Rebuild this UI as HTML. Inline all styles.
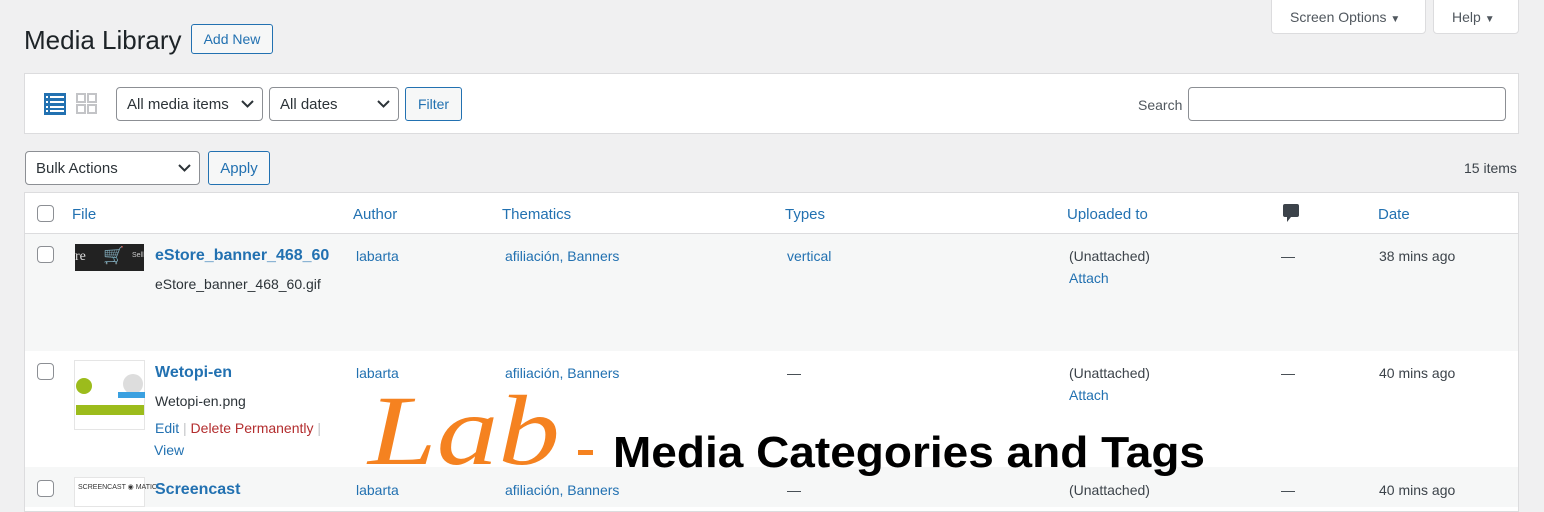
<!DOCTYPE html>
<html><head><meta charset="utf-8"><style>
*{box-sizing:border-box;margin:0;padding:0}
body{width:1544px;height:500px;overflow:hidden;background:#f0f0f1;font-family:"Liberation Sans",sans-serif;font-size:13px;color:#3c434a;position:relative}
.a{position:absolute}
.link{color:#2271b1}
.btn{position:absolute;border:1px solid #2271b1;color:#2271b1;background:#f6f7f7;border-radius:3px;font-size:13px;text-align:center}
.sel{position:absolute;border:1px solid #8c8f94;background:#fff;border-radius:4px;font-size:15px;color:#2c3338;padding-left:10px}
.sel svg{position:absolute;right:8px;top:50%;margin-top:-4px}
.cb{position:absolute;width:17px;height:17px;border:1px solid #8c8f94;border-radius:4px;background:#fff}
.t{position:absolute;white-space:nowrap}
</style></head><body>
<div class="a" style="left:1271px;top:-2px;width:155px;height:36px;background:#fff;border:1px solid #dcdcde;border-radius:0 0 4px 4px"></div>
<div class="t" style="left:1290px;top:9px;font-size:14px;color:#50575e">Screen Options <span style="font-size:10px">▼</span></div>
<div class="a" style="left:1433px;top:-2px;width:86px;height:36px;background:#fff;border:1px solid #dcdcde;border-radius:0 0 4px 4px"></div>
<div class="t" style="left:1452px;top:9px;font-size:14px;color:#50575e">Help <span style="font-size:10px">▼</span></div>

<div class="t" style="left:24px;top:25px;font-size:26px;color:#1d2327">Media Library</div>
<div class="btn" style="left:191px;top:24px;width:82px;height:30px;line-height:29px;font-size:14px">Add New</div>

<div class="a" style="left:24px;top:73px;width:1495px;height:61px;background:#fff;border:1px solid #dcdcde"></div>
<svg class="a" style="left:44px;top:93px" width="22" height="22"><rect width="22" height="22" fill="#2271b1"/><g fill="#fff"><rect x="2" y="3" width="2" height="2"/><rect x="6" y="3" width="14" height="2"/><rect x="2" y="8" width="2" height="2"/><rect x="6" y="8" width="14" height="2"/><rect x="2" y="13" width="2" height="2"/><rect x="6" y="13" width="14" height="2"/><rect x="2" y="17" width="2" height="2"/><rect x="6" y="17" width="14" height="2"/></g></svg>
<svg class="a" style="left:76px;top:93px" width="21" height="21"><g fill="#c3c4c7"><rect width="10" height="10"/><rect x="11" width="10" height="10"/><rect y="11" width="10" height="10"/><rect x="11" y="11" width="10" height="10"/></g><g fill="#fff"><rect x="2" y="2" width="6" height="6"/><rect x="13" y="2" width="6" height="6"/><rect x="2" y="13" width="6" height="6"/><rect x="13" y="13" width="6" height="6"/></g></svg>
<div class="sel" style="left:116px;top:87px;width:147px;height:34px;line-height:34px">All media items<svg width="13" height="8"><path d="M1 1l5.5 5.5L12 1" stroke="#2c3338" stroke-width="2" fill="none"/></svg></div>
<div class="sel" style="left:269px;top:87px;width:130px;height:34px;line-height:34px">All dates<svg width="13" height="8"><path d="M1 1l5.5 5.5L12 1" stroke="#2c3338" stroke-width="2" fill="none"/></svg></div>
<div class="btn" style="left:405px;top:87px;width:57px;height:34px;line-height:33px;font-size:14px">Filter</div>
<div class="t" style="left:1138px;top:97px;font-size:14px;color:#50575e">Search</div>
<div class="a" style="left:1188px;top:87px;width:318px;height:34px;border:1px solid #8c8f94;border-radius:4px;background:#fff"></div>

<div class="sel" style="left:25px;top:151px;width:175px;height:34px;line-height:34px">Bulk Actions<svg width="13" height="8"><path d="M1 1l5.5 5.5L12 1" stroke="#2c3338" stroke-width="2" fill="none"/></svg></div>
<div class="btn" style="left:208px;top:151px;width:62px;height:34px;line-height:34px;font-size:15px">Apply</div>
<div class="t" style="left:1464px;top:160px;font-size:14px;color:#3c434a">15 items</div>

<div class="a" style="left:24px;top:192px;width:1495px;height:320px;background:#fff;border:1px solid #dcdcde"></div>
<div class="a" style="left:25px;top:233px;width:1493px;height:1px;background:#dcdcde"></div>
<div class="a" style="left:25px;top:234px;width:1493px;height:117px;background:#f6f7f7"></div>
<div class="a" style="left:25px;top:467px;width:1493px;height:40px;background:#f6f7f7"></div>

<div class="cb" style="left:37px;top:205px"></div>
<div class="t link" style="left:72px;top:206px;font-size:15px">File</div>
<div class="t link" style="left:353px;top:206px;font-size:15px">Author</div>
<div class="t link" style="left:502px;top:206px;font-size:15px">Thematics</div>
<div class="t link" style="left:785px;top:206px;font-size:15px">Types</div>
<div class="t link" style="left:1067px;top:206px;font-size:15px">Uploaded to</div>
<svg class="a" style="left:1283px;top:204px" width="16" height="18"><path d="M2 0h12a2 2 0 0 1 2 2v9a2 2 0 0 1-2 2H8l-4 5v-5H2a2 2 0 0 1-2-2V2a2 2 0 0 1 2-2z" fill="#3c434a"/></svg>
<div class="t link" style="left:1378px;top:206px;font-size:15px">Date</div>

<!-- row 1 -->
<div class="cb" style="left:37px;top:246px"></div>
<div class="a" style="left:75px;top:244px;width:69px;height:27px;background:#222"><span class="t" style="color:#ddd;left:0;top:5px;font-family:'Liberation Serif',serif;font-size:14px">re</span><span class="t" style="color:#aaa;left:28px;top:2px;font-size:17px">🛒</span><span class="t" style="color:#ccc;left:57px;top:8px;font-size:7px">Sell</span></div>
<div class="t link" style="left:155px;top:247px;font-size:16px;font-weight:bold;color:#2271b1">eStore_banner_468_60</div>
<div class="t" style="left:155px;top:276px;font-size:14px;color:#2c3338">eStore_banner_468_60.gif</div>
<div class="t link" style="left:356px;top:248px;font-size:14px">labarta</div>
<div class="t link" style="left:505px;top:248px;font-size:14px">afiliación, Banners</div>
<div class="t link" style="left:787px;top:248px;font-size:14px">vertical</div>
<div class="t" style="left:1069px;top:248px;font-size:14px">(Unattached)</div>
<div class="t link" style="left:1069px;top:270px;font-size:14px">Attach</div>
<div class="t" style="left:1281px;top:248px;font-size:14px">—</div>
<div class="t" style="left:1379px;top:248px;font-size:14px">38 mins ago</div>

<!-- row 2 -->
<div class="cb" style="left:37px;top:363px"></div>
<div class="a" style="left:74px;top:360px;width:71px;height:70px;background:#fff;border:1px solid #e5e5e5">
<div class="a" style="left:1px;top:17px;width:16px;height:16px;border-radius:50%;background:#9cbc1c"></div>
<div class="a" style="left:48px;top:13px;width:20px;height:20px;border-radius:50%;background:#ddd"></div>
<div class="a" style="left:43px;top:31px;width:27px;height:6px;background:#3aa0e0"></div>
<div class="a" style="left:1px;top:44px;width:68px;height:10px;background:#9cbc1c"></div></div>
<div class="t link" style="left:155px;top:364px;font-size:16px;font-weight:bold">Wetopi-en</div>
<div class="t" style="left:155px;top:393px;font-size:14px;color:#2c3338">Wetopi-en.png</div>
<div class="t" style="left:155px;top:420px;font-size:14px"><span class="link">Edit</span> <span style="color:#c3c4c7">|</span> <span style="color:#b32d2e">Delete Permanently</span> <span style="color:#c3c4c7">|</span></div>
<div class="t link" style="left:154px;top:442px;font-size:14px">View</div>
<div class="t link" style="left:356px;top:365px;font-size:14px">labarta</div>
<div class="t link" style="left:505px;top:365px;font-size:14px">afiliación, Banners</div>
<div class="t" style="left:787px;top:365px;font-size:14px">—</div>
<div class="t" style="left:1069px;top:365px;font-size:14px">(Unattached)</div>
<div class="t link" style="left:1069px;top:387px;font-size:14px">Attach</div>
<div class="t" style="left:1281px;top:365px;font-size:14px">—</div>
<div class="t" style="left:1379px;top:365px;font-size:14px">40 mins ago</div>

<!-- row 3 -->
<div class="cb" style="left:37px;top:480px"></div>
<div class="a" style="left:74px;top:477px;width:71px;height:30px;background:#fff;border:1px solid #e5e5e5"><span class="t" style="left:3px;top:5px;font-size:7px;color:#333">SCREENCAST ◉ MATIC</span></div>
<div class="t link" style="left:155px;top:481px;font-size:16px;font-weight:bold">Screencast</div>
<div class="t link" style="left:356px;top:482px;font-size:14px">labarta</div>
<div class="t link" style="left:505px;top:482px;font-size:14px">afiliación, Banners</div>
<div class="t" style="left:787px;top:482px;font-size:14px">—</div>
<div class="t" style="left:1069px;top:482px;font-size:14px">(Unattached)</div>
<div class="t" style="left:1281px;top:482px;font-size:14px">—</div>
<div class="t" style="left:1379px;top:482px;font-size:14px">40 mins ago</div>

<svg class="a" style="left:0;top:0" width="1544" height="500">
<text x="368" y="464" font-family="Liberation Serif,serif" font-style="italic" font-size="100" fill="#f58220" textLength="192" lengthAdjust="spacingAndGlyphs">Lab</text>
<rect x="578" y="450" width="15" height="5" fill="#f58220"/>
<text x="613" y="467" font-family="Liberation Sans,sans-serif" font-weight="bold" font-size="44" fill="#000" textLength="592" lengthAdjust="spacingAndGlyphs">Media Categories and Tags</text>
</svg>
</body></html>
